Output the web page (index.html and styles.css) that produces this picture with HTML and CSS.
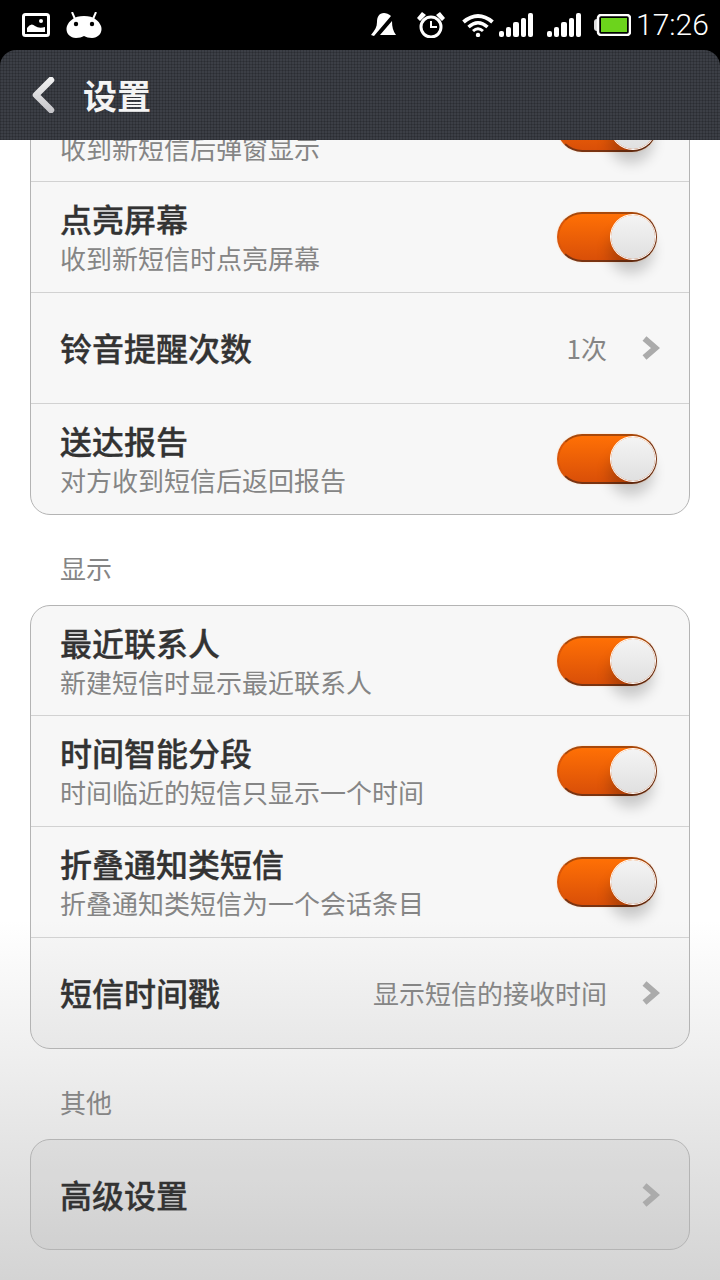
FILE: index.html
```html
<!DOCTYPE html>
<html>

<head>
    <title>设置</title>
    <link rel="stylesheet" href="styles.css">
</head>

<body>
    <svg class="defs">
        <defs>
            <linearGradient id="backFill" gradientUnits="userSpaceOnUse" x1="0" y1="0" x2="0" y2="36">
                <stop offset="0" stop-color="#f4f4f4" />
                <stop offset="1" stop-color="#c4c4c8" />
            </linearGradient>
            <symbol id="signal" viewBox="0 0 34 24">
                <rect x="0" y="18" width="5" height="6" rx="2" fill="#fff" />
                <rect x="7" y="14" width="5" height="10" rx="2" fill="#fff" />
                <rect x="14" y="9" width="6" height="15" rx="2" fill="#fff" />
                <rect x="22" y="5" width="5" height="19" rx="2" fill="#fff" />
                <rect x="29" y="0" width="5" height="24" rx="2" fill="#fff" />
            </symbol>
            <symbol id="chevron" viewBox="0 0 18 24">
                <path d="M2.5 2.5 L13.5 12 L2.5 21.5" fill="none" stroke="#ababab" stroke-width="6" />
            </symbol>
        </defs>
    </svg>

    <div id="statusbar">
        <svg class="icon-picture" width="28" height="24" viewBox="0 0 28 24">
            <rect x="1.5" y="1.5" width="25" height="21" rx="2" fill="none" stroke="#fff" stroke-width="3" />
            <path d="M5 19 V15 Q9 9 13 13 Q17 16 23 14 V19 Z" fill="#fff" />
            <circle cx="19" cy="8" r="2" fill="#fff" />
        </svg>
        <svg class="icon-android" width="36" height="26" viewBox="0 0 36 26">
            <path d="M9 7 L6 0 M27 7 L30 0" stroke="#fff" stroke-width="2" />
            <path d="M18 4 C8 4 3 9 1 14 C-1 20 3 26 10 26 C13 26 16 25 18 24 C20 25 23 26 26 26 C33 26 37 20 35 14 C33 9 28 4 18 4 Z" fill="#fff" />
            <circle cx="10" cy="12" r="2.2" fill="#000" />
            <circle cx="26" cy="12" r="2.2" fill="#000" />
        </svg>
        <div class="status-right">
            <svg class="icon-bell" width="26" height="24" viewBox="0 0 26 24">
                <path d="M13 0 C8 0 6 4 6 9 C6 14 4 17 0 22 L3 23 L20 3 C18 1 15 0 13 0 Z M21 8 L9 22 H25 C22 18 21 14 21 8 Z" fill="#fff" />
            </svg>
            <svg class="icon-alarm" width="28" height="26" viewBox="0 0 28 26">
                <circle cx="14" cy="15" r="10" fill="none" stroke="#fff" stroke-width="3" />
                <path d="M14 9 V15 H20" fill="none" stroke="#fff" stroke-width="2" />
                <path d="M0 6 L5 0 L9 3 L3 9 Z M28 6 L23 0 L19 3 L25 9 Z" fill="#fff" />
            </svg>
            <svg class="icon-wifi" width="32" height="24" viewBox="0 0 32 24">
                <path d="M1.5 9 Q16 -3 30.5 9" fill="none" stroke="#fff" stroke-width="4" />
                <path d="M6.5 14 Q16 5.5 25.5 14" fill="none" stroke="#fff" stroke-width="3.5" />
                <path d="M11 18 Q16 13.5 21 18" fill="none" stroke="#fff" stroke-width="3" />
                <circle cx="16" cy="22" r="2.2" fill="#fff" />
            </svg>
            <svg class="icon-signal" width="34" height="24"><use href="#signal" /></svg>
            <svg class="icon-signal-2" width="34" height="24"><use href="#signal" /></svg>
            <svg class="icon-battery" width="37" height="22" viewBox="0 0 37 22">
                <path d="M5 5 H3 Q0 5 0 8 V14 Q0 17 3 17 H5 Z" fill="#ddd" />
                <rect x="4" y="1" width="32" height="20" rx="3" fill="#000" stroke="#fff" stroke-width="2.5" />
                <rect x="7" y="4" width="26" height="14" fill="#6cd41c" />
            </svg>
            <span class="clock">17:26</span>
        </div>
    </div>

    <div id="header">
        <svg class="back" width="26" height="36" viewBox="0 0 26 36">
            <path d="M21 3 L6 18 L21 33" fill="none" stroke="url(#backFill)" stroke-width="6.5" stroke-linecap="round" stroke-linejoin="round" />
        </svg>
        <span class="header-title">设置</span>
    </div>

    <div id="content">
        <div class="card card-first">
            <div class="row">
                <div class="row-text">
                    <div class="row-title">弹窗显示</div>
                    <div class="row-sub">收到新短信后弹窗显示</div>
                </div>
                <div class="switch"><div class="knob"></div></div>
            </div>
            <div class="row">
                <div class="row-text">
                    <div class="row-title">点亮屏幕</div>
                    <div class="row-sub">收到新短信时点亮屏幕</div>
                </div>
                <div class="switch"><div class="knob"></div></div>
            </div>
            <div class="row">
                <div class="row-text">
                    <div class="row-title">铃音提醒次数</div>
                </div>
                <span class="row-value">1次</span>
                <svg class="chevron"><use href="#chevron" /></svg>
            </div>
            <div class="row">
                <div class="row-text">
                    <div class="row-title">送达报告</div>
                    <div class="row-sub">对方收到短信后返回报告</div>
                </div>
                <div class="switch"><div class="knob"></div></div>
            </div>
        </div>

        <div class="section-label">显示</div>
        <div class="card">
            <div class="row">
                <div class="row-text">
                    <div class="row-title">最近联系人</div>
                    <div class="row-sub">新建短信时显示最近联系人</div>
                </div>
                <div class="switch"><div class="knob"></div></div>
            </div>
            <div class="row">
                <div class="row-text">
                    <div class="row-title">时间智能分段</div>
                    <div class="row-sub">时间临近的短信只显示一个时间</div>
                </div>
                <div class="switch"><div class="knob"></div></div>
            </div>
            <div class="row">
                <div class="row-text">
                    <div class="row-title">折叠通知类短信</div>
                    <div class="row-sub">折叠通知类短信为一个会话条目</div>
                </div>
                <div class="switch"><div class="knob"></div></div>
            </div>
            <div class="row">
                <div class="row-text">
                    <div class="row-title">短信时间戳</div>
                </div>
                <span class="row-value">显示短信的接收时间</span>
                <svg class="chevron"><use href="#chevron" /></svg>
            </div>
        </div>

        <div class="section-label">其他</div>
        <div class="card">
            <div class="row">
                <div class="row-text">
                    <div class="row-title">高级设置</div>
                </div>
                <svg class="chevron"><use href="#chevron" /></svg>
            </div>
        </div>
    </div>
</body>

</html>
```

FILE: styles.css
```css
* {
    box-sizing: border-box;
}

body {
    margin: 0;
    width: 720px;
    height: 1280px;
    overflow: hidden;
    background: #000;
    font-family: "Noto Sans CJK SC", "Noto Sans", sans-serif;
}

.defs {
    position: absolute;
    width: 0;
    height: 0;
}

#statusbar {
    display: flex;
    align-items: center;
    height: 50px;
    padding-left: 22px;
    background: #000;
}

.icon-android {
    margin-left: 16px;
}

.status-right {
    display: flex;
    align-items: center;
    margin-left: auto;
}

.icon-alarm {
    margin-left: 20px;
}

.icon-wifi {
    margin-left: 17px;
}

.icon-signal {
    margin-left: 5px;
}

.icon-signal-2 {
    margin-left: 14px;
}

.icon-battery {
    margin-left: 13px;
}

.clock {
    width: 84px;
    margin-left: 5px;
    font-family: Roboto, sans-serif;
    font-weight: 300;
    font-size: 30px;
    line-height: 50px;
    color: #fff;
}

#header {
    display: flex;
    align-items: center;
    height: 90px;
    padding-left: 30px;
    border-radius: 16px 16px 0 0;
    background-color: #3c3f46;
    background-image:
        repeating-linear-gradient(90deg, rgba(0, 0, 0, 0.16) 0 1px, transparent 1px 3px),
        repeating-linear-gradient(0deg, rgba(0, 0, 0, 0.16) 0 1px, transparent 1px 3px);
}

.header-title {
    margin-left: 27px;
    margin-top: -2px;
    font-size: 34px;
    font-weight: 700;
    color: #f4f4f4;
}

#content {
    height: 1140px;
    overflow: hidden;
    padding: 0 30px;
    background: linear-gradient(#fff 0, #fff 780px, #d4d4d4 1140px);
}

.card {
    border: 1px solid #b4b4b4;
    border-radius: 20px;
    background: rgba(0, 0, 0, 0.03);
}

.card-first {
    margin-top: -69px;
}

.row {
    display: flex;
    align-items: center;
    height: 111px;
    padding: 0 30px 0 29px;
    border-top: 1px solid #d2d2d2;
}

.row:first-child {
    height: 109px;
    border-top: 0;
}

.row-text {
    flex: 1;
    margin-top: -2px;
}

.row-title {
    font-size: 32px;
    line-height: 40px;
    font-weight: 500;
    -webkit-text-stroke: 0.3px #333;
    color: #333;
}

.row-sub {
    margin-top: 2px;
    margin-bottom: -2px;
    font-size: 26px;
    line-height: 36px;
    color: #858585;
}

.row-value {
    margin-top: -2px;
    font-size: 26px;
    color: #858585;
}

.chevron {
    width: 18px;
    height: 24px;
    margin-left: 35px;
    margin-right: -1px;
}

.switch {
    position: relative;
    width: 100px;
    height: 50px;
    margin-right: 2px;
    border: 2px solid #a8480a;
    border-left-color: #d9560a;
    border-right-color: #7a3412;
    border-bottom-color: #7a3412;
    border-radius: 25px;
    background: linear-gradient(#ff7005, #d94f08);
    box-shadow: 0 0 2px #ffd9b8;
}

.knob {
    position: absolute;
    top: 1px;
    right: 0;
    width: 44px;
    height: 44px;
    border-radius: 50%;
    background: linear-gradient(#f4f4f4, #e0e0e0);
    box-shadow: 0 0 0 1px #fff, -2px 14px 14px rgba(0, 0, 0, 0.2);
}

.section-label {
    height: 90px;
    padding: 35px 0 0 30px;
    font-size: 26px;
    line-height: 36px;
    color: #858585;
}
```
